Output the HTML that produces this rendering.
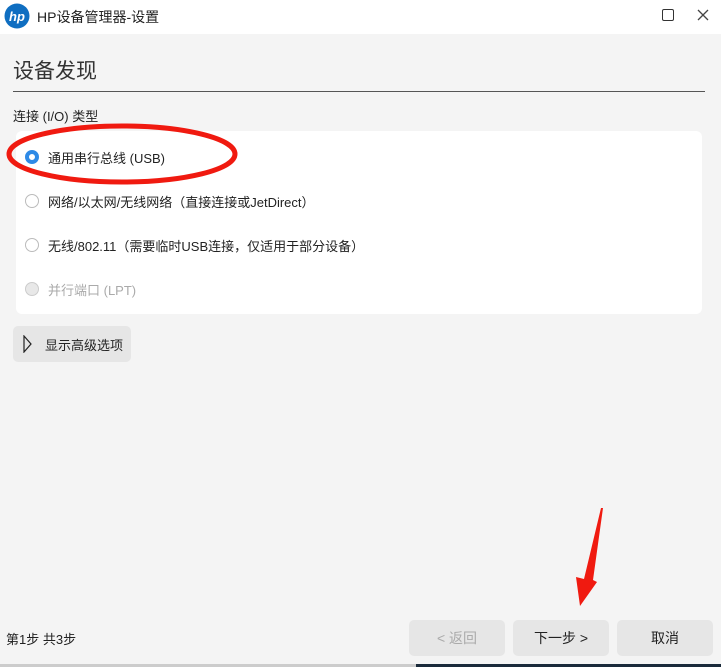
<!DOCTYPE html>
<html><head><meta charset="utf-8"><style>
*{margin:0;padding:0;box-sizing:border-box}
body{width:721px;height:667px;background:#f4f4f4;font-family:"Liberation Sans","Noto Sans CJK SC",sans-serif;color:#222;position:relative;overflow:hidden}
.abs{position:absolute}
.tb{left:0;top:0;width:721px;height:34px;background:#fff}
.t{font-size:14px;white-space:nowrap}
.panel{left:16px;top:131px;width:686px;height:183px;background:#fff;border-radius:6px}
.r{width:14px;height:14px;border-radius:50%;border:1px solid #bbb;background:#fff}
.btn{top:620px;height:36px;width:96px;background:#e6e6e6;border-radius:5px;font-size:14px;text-align:center;line-height:36px}
</style></head><body>
<div class="abs tb"></div>
<svg class="abs" style="left:4px;top:3px" width="26" height="26" viewBox="0 0 26 26"><circle cx="13" cy="13" r="12.5" fill="#0f6ec1"/><text x="13" y="18" text-anchor="middle" font-family="Liberation Sans" font-style="italic" font-weight="bold" font-size="13" fill="#fff">hp</text></svg>
<div class="abs t" style="left:37px;top:7px;font-size:14px">HP设备管理器-设置</div>
<div class="abs" style="left:662px;top:9px;width:12px;height:12px;border:1.5px solid #333;border-radius:2px"></div>
<svg class="abs" style="left:697px;top:9px" width="12" height="12"><path d="M1 1L11 11M11 1L1 11" stroke="#444" stroke-width="1.3"/></svg>
<div class="abs" style="left:13px;top:55px;font-size:21px;color:#333">设备发现</div>
<div class="abs" style="left:13px;top:91px;width:692px;height:1px;background:#555"></div>
<div class="abs t" style="left:13px;top:106px;font-size:13px">连接 (I/O) 类型</div>
<div class="abs panel"></div>
<div class="abs r" style="left:25px;top:150px;border:4px solid #2e8ae6"></div>
<div class="abs t" style="left:48px;top:148px;font-size:13px">通用串行总线 (USB)</div>
<div class="abs r" style="left:25px;top:194px"></div>
<div class="abs t" style="left:48px;top:192px;font-size:13px">网络/以太网/无线网络（直接连接或JetDirect）</div>
<div class="abs r" style="left:25px;top:238px"></div>
<div class="abs t" style="left:48px;top:236px;font-size:13px">无线/802.11（需要临时USB连接，仅适用于部分设备）</div>
<div class="abs r" style="left:25px;top:282px;background:#e8e8e8;border-color:#ccc"></div>
<div class="abs t" style="left:48px;top:280px;font-size:13px;color:#aaa">并行端口 (LPT)</div>
<div class="abs" style="left:13px;top:326px;width:118px;height:36px;background:#e6e6e6;border-radius:5px"></div>
<svg class="abs" style="left:23px;top:335px" width="10" height="18"><path d="M1 1L8 9L1 17Z" fill="none" stroke="#222" stroke-width="1.2"/></svg>
<div class="abs t" style="left:45px;top:335px;font-size:13px">显示高级选项</div>
<div class="abs t" style="left:6px;top:629px;font-size:13px">第1步 共3步</div>
<div class="abs btn" style="left:409px;color:#aaa">&lt; 返回</div>
<div class="abs btn" style="left:513px">下一步 &gt;</div>
<div class="abs btn" style="left:617px">取消</div>
<div class="abs" style="left:0;top:664px;width:416px;height:3px;background:#ccc"></div>
<div class="abs" style="left:416px;top:664px;width:305px;height:3px;background:#1a2a3a"></div>
<svg class="abs" style="left:0;top:0" width="721" height="667"><ellipse cx="122" cy="154" rx="113" ry="28" fill="none" stroke="#f01a10" stroke-width="5"/><polygon points="603,508 593,580 597,582 580,606 576,577 584,579 601,508" fill="#f01a10"/></svg>
</body></html>
